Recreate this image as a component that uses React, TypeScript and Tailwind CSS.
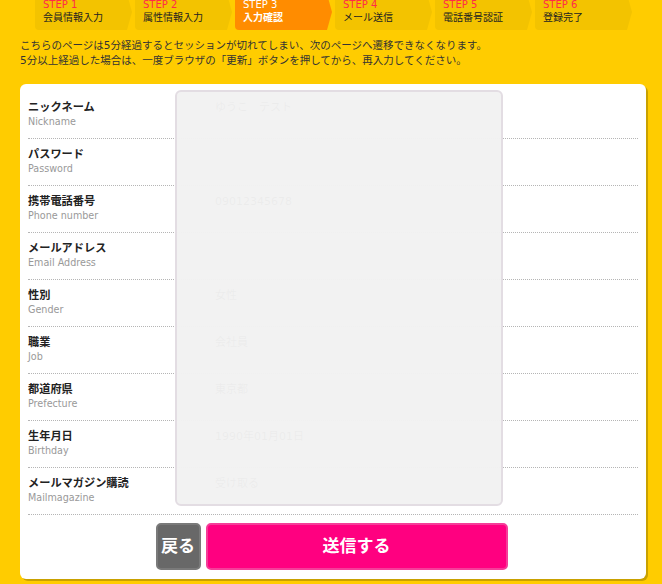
const steps = [
  { no: 1, label: '会員情報入力' },
  { no: 2, label: '属性情報入力' },
  { no: 3, label: '入力確認', active: true },
  { no: 4, label: 'メール送信' },
  { no: 5, label: '電話番号認証' },
  { no: 6, label: '登録完了' },
];

const rows = [
  { ja: 'ニックネーム', en: 'Nickname', value: 'ゆうこ　テスト' },
  { ja: 'パスワード', en: 'Password', value: '' },
  { ja: '携帯電話番号', en: 'Phone number', value: '09012345678' },
  { ja: 'メールアドレス', en: 'Email Address', value: '' },
  { ja: '性別', en: 'Gender', value: '女性' },
  { ja: '職業', en: 'Job', value: '会社員' },
  { ja: '都道府県', en: 'Prefecture', value: '東京都' },
  { ja: '生年月日', en: 'Birthday', value: '1990年01月01日' },
  { ja: 'メールマガジン購読', en: 'Mailmagazine', value: '受け取る' },
];

function StepTab({ no, label, active }: { no: number; label: string; active?: boolean }) {
  return (
    <div
      className={`-mt-[6px] h-[36px] w-[97px] shrink-0 rounded-bl-[4px] pl-[8px] pt-[4px] [clip-path:polygon(0_0,92px_0,97px_50%,92px_100%,0_100%)] ${
        active ? 'bg-[#ff8c00]' : 'bg-[#f3c300]'
      }`}
    >
      <div className={`text-[10px] leading-[13px] ${active ? 'text-white' : 'text-[#ff2b4a]'}`}>
        STEP {no}
      </div>
      <div className={`text-[10px] leading-[13px] ${active ? 'font-bold text-white' : 'text-[#222]'}`}>
        {label}
      </div>
    </div>
  );
}

export default function App() {
  return (
    <div className="min-h-[584px] w-[662px] overflow-hidden bg-[#ffcc00] font-['DejaVu_Sans','Noto_Sans_CJK_JP',sans-serif]">
      {/* steps */}
      <div className="flex h-[30px] gap-[3px] pl-[35px]">
        {steps.map((s) => (
          <StepTab key={s.no} {...s} />
        ))}
      </div>

      {/* notice */}
      <div className="mt-[8px] pl-[20px] text-[10.5px] leading-[15px] text-[#333]">
        <p>こちらのページは5分経過するとセッションが切れてしまい、次のページへ遷移できなくなります。</p>
        <p>5分以上経過した場合は、一度ブラウザの「更新」ボタンを押してから、再入力してください。</p>
      </div>

      {/* card */}
      <div className="relative ml-[20px] mt-[16px] w-[626px] rounded-[6px] bg-white px-[8px] pb-[9px] pt-[8px] shadow-[2px_2px_0_#c9a100]">
        {rows.map((r) => (
          <div key={r.en} className="flex h-[47px] border-b border-dotted border-[#b5b5b5]">
            <div className="w-[187px] pt-[9px]">
              <div className="text-[11.2px] font-bold leading-[14px] text-[#222]">{r.ja}</div>
              <div className="text-[9.6px] leading-[14px] text-[#999]">{r.en}</div>
            </div>
            <div className="pt-[9px] text-[11px] leading-[14px] text-[#333]">{r.value}</div>
          </div>
        ))}

        {/* confirm overlay */}
        <div className="absolute left-[155px] top-[6px] h-[416px] w-[328px] rounded-[6px] border-2 border-[#e3dde3] bg-[#f2f2f2]/[0.97]" />

        <div className="mt-[8px] flex justify-center gap-[5px] pr-[3px]">
          <button className="h-[47px] w-[45px] rounded-[5px] border-2 border-[#7a7a7a] bg-[#686868] text-[17px] font-bold text-white">
            戻る
          </button>
          <button className="h-[47px] w-[302px] rounded-[5px] border-2 border-[#f53d99] bg-[#ff0080] text-[17px] font-bold text-white">
            送信する
          </button>
        </div>
      </div>
    </div>
  );
}
